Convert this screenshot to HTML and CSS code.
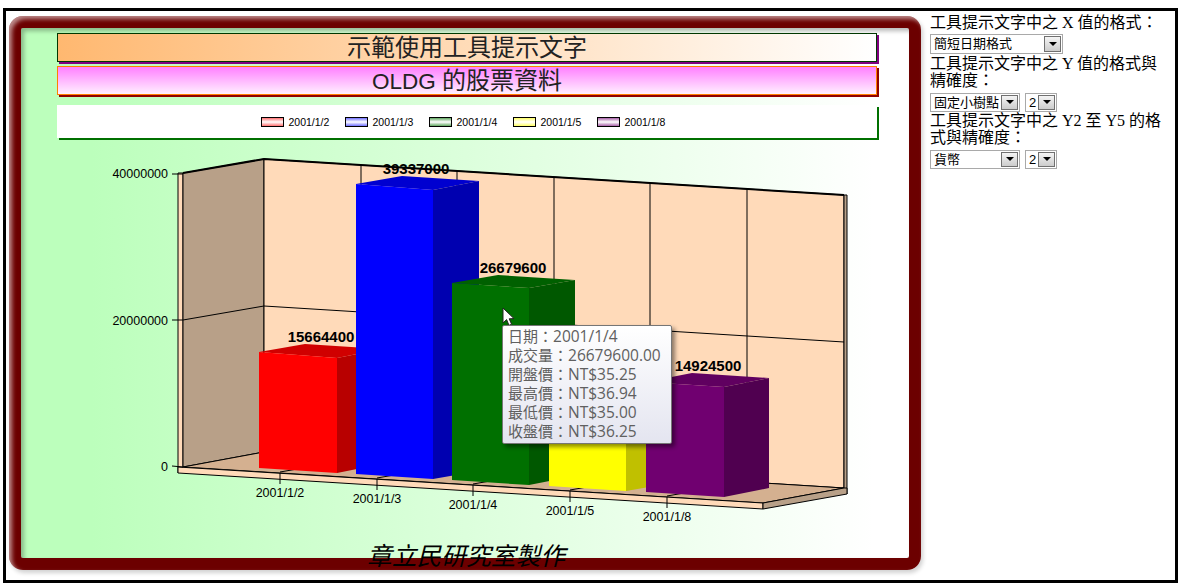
FILE: index.html
```html
<!DOCTYPE html>
<html lang="zh-Hant">
<head>
<meta charset="utf-8">
<title>示範使用工具提示文字</title>
<link rel="stylesheet" href="styles.css">
</head>
<body>
<div class="page">
  <main class="chart">
    <h1 class="title title-main">示範使用工具提示文字</h1>
    <h2 class="title title-sub"><span class="latin">OLDG </span>的股票資料</h2>
    <ul class="legend">
      <li class="legend-item"><span class="swatch swatch-red"></span>2001/1/2</li>
      <li class="legend-item"><span class="swatch swatch-blue"></span>2001/1/3</li>
      <li class="legend-item"><span class="swatch swatch-green"></span>2001/1/4</li>
      <li class="legend-item"><span class="swatch swatch-yellow"></span>2001/1/5</li>
      <li class="legend-item"><span class="swatch swatch-purple"></span>2001/1/8</li>
    </ul>
    <svg class="plot" viewBox="21 140 888 390" width="888" height="390" xmlns="http://www.w3.org/2000/svg">
      <polygon class="wall-front" points="178,173 183,173 183,467 178,473"/>
      <polygon class="wall-side" points="183,173 264,159 264,452 183,467"/>
      <polygon class="wall-back" points="264,159 844,195 844,488 264,452"/>
      <polygon class="wall-side" points="844,195 847,195 847,494 844,488"/>
      <polygon class="floor" points="183,467 264,452 844,488 763,503"/>
      <polygon class="wall-front" points="178,467 763,503 763,509 178,473"/>
      <polygon class="wall-side" points="763,503 844,488 847,488 847,494 763,509"/>
      <g class="grid">
        <line x1="361" y1="165" x2="361" y2="458"/>
        <line x1="457" y1="171" x2="457" y2="464"/>
        <line x1="554" y1="177" x2="554" y2="470"/>
        <line x1="650" y1="183" x2="650" y2="476"/>
        <line x1="747" y1="189" x2="747" y2="482"/>
        <polyline points="183,320 264,306 844,342"/>
        <line x1="280" y1="472" x2="361" y2="458"/>
        <line x1="377" y1="478" x2="457" y2="464"/>
        <line x1="473" y1="484" x2="554" y2="470"/>
        <line x1="570" y1="490" x2="650" y2="476"/>
        <line x1="667" y1="496" x2="747" y2="482"/>
      </g>
      <polyline class="edge" points="183,173 264,159 844,195"/>
      <g class="grid">
        <line x1="172" y1="174" x2="183" y2="174"/>
        <line x1="172" y1="320" x2="183" y2="320"/>
        <line x1="172" y1="466" x2="183" y2="467"/>
        <line x1="280" y1="473" x2="280" y2="484"/>
        <line x1="377" y1="479" x2="377" y2="490"/>
        <line x1="473" y1="485" x2="473" y2="496"/>
        <line x1="570" y1="491" x2="570" y2="502"/>
        <line x1="667" y1="497" x2="667" y2="508"/>
      </g>

      <polygon fill="#d00000" points="259,352 337,358 382,349 305,344"/>
      <polygon fill="#b80000" points="337,358 382,349 382,464 337,473"/>
      <polygon fill="#ff0000" points="259,352 337,358 337,473 259,468"/>

      <polygon fill="#0000d0" points="356,184 433,190 479,181 402,176"/>
      <polygon fill="#0000b0" points="433,190 479,181 479,471 433,479"/>
      <polygon fill="#0000ff" points="356,184 433,190 433,479 356,474"/>

      <polygon fill="#006000" points="452,283 529,288 575,280 498,275"/>
      <polygon fill="#005800" points="529,288 575,280 575,476 529,485"/>
      <polygon fill="#007000" points="452,283 529,288 529,485 452,480"/>

      <polygon fill="#d8d800" points="549,378 626,384 672,375 595,370"/>
      <polygon fill="#c0c000" points="626,384 672,375 672,483 626,491"/>
      <polygon fill="#ffff00" points="549,378 626,384 626,491 549,486"/>

      <polygon fill="#600060" points="646,382 724,387 769,378 692,373"/>
      <polygon fill="#500050" points="724,387 769,378 769,488 724,497"/>
      <polygon fill="#700070" points="646,382 724,387 724,497 646,492"/>

      <g class="value">
        <text x="321" y="342">15664400</text>
        <text x="416" y="174">39337000</text>
        <text x="513" y="273">26679600</text>
        <text x="708" y="371">14924500</text>
      </g>
      <g class="axis-y">
        <text x="168" y="178">40000000</text>
        <text x="168" y="325">20000000</text>
        <text x="168" y="471">0</text>
      </g>
      <g class="axis-x">
        <text x="280" y="497">2001/1/2</text>
        <text x="377" y="503">2001/1/3</text>
        <text x="473" y="509">2001/1/4</text>
        <text x="570" y="515">2001/1/5</text>
        <text x="667" y="521">2001/1/8</text>
      </g>
    </svg>
    <p class="credit">章立民研究室製作</p>
    <svg class="cursor" viewBox="0 0 13 20" width="13" height="20" xmlns="http://www.w3.org/2000/svg">
      <path d="M1 1 L1 16 L4.6 12.6 L7 18.4 L9.6 17.2 L7.2 11.8 L12 11.6 Z" fill="#fff" stroke="#222" stroke-width="1"/>
    </svg>
    <div class="tooltip">
      <div>日期：<span class="num">2001/1/4</span></div>
      <div>成交量：<span class="num">26679600.00</span></div>
      <div>開盤價：<span class="num">NT$35.25</span></div>
      <div>最高價：<span class="num">NT$36.94</span></div>
      <div>最低價：<span class="num">NT$35.00</span></div>
      <div>收盤價：<span class="num">NT$36.25</span></div>
    </div>
  </main>
  <aside class="panel">
    <div class="label">工具提示文字中之 X 值的格式：</div>
    <div class="row row-first">
      <span class="sel sel-wide"><select><option>簡短日期格式</option></select></span>
    </div>
    <div class="label">工具提示文字中之 Y 值的格式與精確度：</div>
    <div class="row">
      <span class="sel sel-mid"><select><option>固定小樹點</option></select></span>
      <span class="sel sel-num"><select><option>2</option></select></span>
    </div>
    <div class="label">工具提示文字中之 Y2 至 Y5 的格式與精確度：</div>
    <div class="row">
      <span class="sel sel-mid"><select><option>貨幣</option></select></span>
      <span class="sel sel-num"><select><option>2</option></select></span>
    </div>
  </aside>
</div>
</body>
</html>
```
FILE: styles.css
```css
* { box-sizing: border-box; }
html, body { margin: 0; padding: 0; background: #fff; }
body { padding: 8px 2px 5px 3px; width: 1180px; height: 588px; overflow: hidden; }

.page {
  display: flex;
  align-items: flex-start;
  height: 575px;
  border: 3px solid #000;
  padding: 5px 0 0 3px;
}

.chart {
  position: relative;
  flex: none;
  width: 912px;
  height: 554px;
  border: 12px solid #6c0000;
  border-radius: 14px;
  background: linear-gradient(to right, #bcffbc 8%, #ffffff 96%);
  background-origin: padding-box;
  background-clip: padding-box;
  box-shadow: 2px 3px 4px rgba(0, 0, 0, .18), inset 3px 3px 4px rgba(0, 0, 0, .28);
  padding-top: 5px;
  font-family: "Liberation Sans", "Noto Sans CJK TC", sans-serif;
}
.chart::before {
  content: "";
  position: absolute;
  inset: -12px;
  border-radius: 14px;
  box-shadow: inset 3px 3px 4px rgba(255, 255, 255, .55);
  pointer-events: none;
}

.title {
  width: 820px;
  height: 29px;
  margin: 0 0 0 36px;
  font-size: 24px;
  font-weight: normal;
  line-height: 27px;
  text-align: center;
  color: #222;
}
.title-main {
  border: 1px solid #003800;
  background: linear-gradient(to right, #ffb870, #ffffff);
  box-shadow: 2px 2px 0 #800080;
}
.title-sub {
  margin-top: 4px;
  border: 1px solid #ff8000;
  background: linear-gradient(to bottom, #ff80ff, #fff0ff);
  box-shadow: 2px 2px 0 #900000;
}
.latin { font-size: 22.5px; }

.legend {
  display: flex;
  justify-content: center;
  gap: 15px;
  list-style: none;
  width: 820px;
  height: 33px;
  margin: 10px 0 2px 36px;
  padding: 0 8px 0 0;
  align-items: center;
  background: #fff;
  box-shadow: 2px 2px 0 #007000;
  font-size: 10.5px;
  color: #000;
}
.legend-item { display: flex; align-items: center; gap: 5px; width: 69px; white-space: nowrap; }
.swatch { flex: none; width: 23px; height: 10px; border: 1px solid #000; }
.swatch-red { background: linear-gradient(#ff7070, #fff 50%, #ff7070); }
.swatch-blue { background: linear-gradient(#7070ff, #fff 50%, #7070ff); }
.swatch-green { background: linear-gradient(#60a860, #fff 50%, #60a860); }
.swatch-yellow { background: linear-gradient(#ffff60, #fff 50%, #ffff60); }
.swatch-purple { background: linear-gradient(#a860a8, #fff 50%, #a860a8); }

.plot { display: block; }
.wall-front { fill: #ffdab9; stroke: #000; stroke-width: 1; }
.wall-side { fill: #b8a088; stroke: #000; stroke-width: 1; }
.wall-back { fill: #ffdab9; stroke: #000; stroke-width: 1; }
.floor { fill: #d4b090; stroke: #000; stroke-width: 1; }
.grid line, .grid polyline { stroke: #000; stroke-width: 1; fill: none; }
.edge { stroke: #000; stroke-width: 2; fill: none; }
.value text { font-size: 15px; font-weight: bold; text-anchor: middle; fill: #000; }
.axis-y text { font-size: 12.5px; text-anchor: end; fill: #000; }
.axis-x text { font-size: 12.5px; text-anchor: middle; fill: #000; }

.credit {
  margin: 0;
  position: absolute;
  left: 346px;
  top: 514px;
  font-size: 24.75px;
  line-height: 30px;
  font-style: italic;
  white-space: nowrap;
  color: #000;
}

.cursor { position: absolute; left: 481px; top: 279px; }

.tooltip {
  position: absolute;
  left: 481px;
  top: 297px;
  width: 170px;
  height: 119px;
  padding: 1px 0 0 5px;
  border: 1px solid #767676;
  border-radius: 2px;
  background: linear-gradient(#ffffff, #e4e5f0);
  box-shadow: 3px 3px 4px rgba(0, 0, 0, .45);
  font-family: "Open Sans", "Noto Sans CJK TC", sans-serif;
  font-size: 15px;
  line-height: 19px;
  color: #606060;
  white-space: nowrap;
}
.num { font-size: 15.5px; }

.panel {
  flex: none;
  width: 242px;
  margin: -2px 0 0 9px;
  font-family: "Liberation Serif", "Noto Sans CJK TC", serif;
  font-size: 16px;
  line-height: 17.5px;
  color: #000;
}
.row { display: flex; gap: 5px; height: 19px; margin-top: 3px; }
.row-first { height: 20px; margin-top: 2px; margin-bottom: 1px; }

.sel { position: relative; display: block; height: 100%; }
.sel::after {
  content: "";
  position: absolute;
  top: 2px;
  right: 2px;
  bottom: 2px;
  width: 15px;
  border: 1px solid #707070;
  background: linear-gradient(#f4f4f4, #cccccc);
  pointer-events: none;
}
.sel::before {
  content: "";
  position: absolute;
  z-index: 1;
  top: 50%;
  right: 6px;
  margin-top: -2px;
  border: 4px solid transparent;
  border-top: 4px solid #000;
  border-bottom: 0;
  pointer-events: none;
}
.sel select {
  appearance: none;
  display: block;
  width: 100%;
  height: 100%;
  margin: 0;
  padding: 0 0 0 3px;
  border: 1px solid #a9a9a9;
  border-radius: 0;
  background: #fff;
  color: #000;
  font-family: "Liberation Sans", "Noto Sans CJK TC", sans-serif;
  font-size: 13px;
}
.sel-wide { width: 133px; }
.sel-mid { width: 90px; }
.sel-num { width: 32px; }
```
